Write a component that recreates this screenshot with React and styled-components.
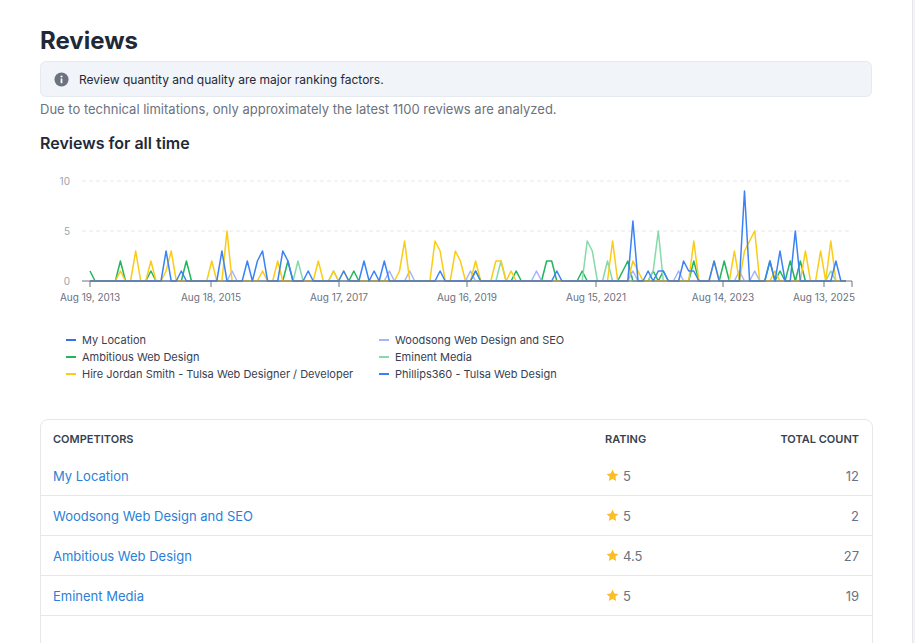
import React from 'react';
import styled, { createGlobalStyle } from 'styled-components';

const Global = createGlobalStyle`
  body { margin: 0; background: #f3f4f6; font-family: Inter, "Noto Sans", sans-serif; }
`;

const Page = styled.div`
  width: 913px;
  height: 643px;
  background: #fff;
  border-right: 1px solid #e5e7eb;
  box-sizing: border-box;
  padding: 26px 40px 0 40px;
  overflow: hidden;
`;

const Title = styled.h1`
  margin: 0 0 6px;
  font-size: 24px;
  font-weight: 700;
  color: #1f2937;
`;

const Notice = styled.div`
  display: flex;
  align-items: center;
  gap: 10px;
  background: #f1f4f9;
  border: 1px solid #e5e9f0;
  border-radius: 6px;
  padding: 0 13px;
  height: 34px;
  font-size: 12px;
  color: #1f2937;
`;

const Muted = styled.p`
  margin: 4px 0 0;
  font-size: 13px;
  color: #6b7280;
`;

const Subtitle = styled.h2`
  margin: 16px 0 0;
  font-size: 16px;
  font-weight: 600;
  color: #1f2937;
`;

const ChartWrap = styled.div`
  margin: 8px 0 0 -40px;
`;

const Legend = styled.div`
  display: grid;
  grid-template-columns: 313px auto;
  row-gap: 3px;
  margin: 22px 0 0 26px;
  font-size: 11px;
  color: #374151;
`;

const LegendItem = styled.div`
  display: flex;
  align-items: center;
  gap: 6px;
  height: 14px;
  &::before {
    content: '';
    width: 10px;
    height: 2px;
    background: ${p => p.$color};
  }
`;

const Card = styled.div`
  margin-top: 38px;
  border: 1px solid #e5e7eb;
  border-radius: 8px;
  width: 833px;
  box-sizing: border-box;
  height: 240px;
`;

const Row = styled.div`
  display: grid;
  grid-template-columns: 552px 1fr 120px;
  align-items: center;
  height: ${p => (p.$head ? 36 : 40)}px;
  padding: 0 13px 0 12px;
  border-bottom: ${p => (p.$head ? 'none' : '1px solid #e5e7eb')};
  box-sizing: border-box;
`;

const Head = styled.div`
  font-size: 11px;
  font-weight: 600;
  color: #374151;
  text-align: ${p => (p.$right ? 'right' : 'left')};
  padding-top: 2px;
`;

const Name = styled.a`
  color: #2b7fd6;
  font-size: 13px;
  text-decoration: none;
`;

const Rating = styled.div`
  display: flex;
  align-items: center;
  gap: 3px;
  font-size: 13px;
  color: #6b7280;
`;

const Count = styled.div`
  text-align: right;
  font-size: 13px;
  color: #6b7280;
`;

const Star = () => (
  <svg width="15" height="15" viewBox="0 0 24 24">
    <path d="M12 2.5l2.9 6.2 6.6.8-4.9 4.6 1.3 6.6L12 17.4l-5.9 3.3 1.3-6.6-4.9-4.6 6.6-.8z" fill="#fbbf24" />
  </svg>
);

const colors = {
  my: '#3b6fe8',
  wood: '#a5b4fc',
  amb: '#22b55c',
  emi: '#86d9a8',
  hire: '#facc15',
  phil: '#3b82f6',
};

function series(n, seed, density, max, peaks) {
  let s = seed;
  const rnd = () => {
    s = (s * 9301 + 49297) % 233280;
    return s / 233280;
  };
  const a = [];
  for (let i = 0; i < n; i++) a.push(rnd() < density ? 1 + Math.floor(rnd() * max) : 0);
  Object.entries(peaks).forEach(([k, v]) => (a[+k] = v));
  return a;
}

const N = 150;
const data = [
  { c: colors.amb, v: series(N, 7, 0.08, 2, { 0: 1, 90: 2, 91: 2, 140: 2 }) },
  { c: colors.emi, v: series(N, 13, 0.03, 2, { 98: 4, 99: 3, 112: 5 }) },
  { c: colors.wood, v: series(N, 21, 0.03, 1, {}) },
  { c: colors.hire, v: series(N, 5, 0.22, 3, { 27: 5, 62: 4, 68: 4, 103: 4, 119: 4, 130: 4, 131: 5, 146: 4 }) },
  { c: colors.phil, v: series(N, 3, 0.18, 3, { 107: 6, 129: 9, 139: 5, 147: 2 }) },
];

const X0 = 90, X1 = 846, Y0 = 120, YS = 10;
const px = i => X0 + (i / (N - 1)) * (X1 - X0);
const ticks = [
  ['Aug 19, 2013', 90], ['Aug 18, 2015', 211], ['Aug 17, 2017', 339], ['Aug 16, 2019', 467],
  ['Aug 15, 2021', 596], ['Aug 14, 2023', 723], ['Aug 13, 2025', 824],
];

const Chart = () => (
  <svg width="913" height="150" style={{ display: 'block' }}>
    {[0, 5, 10].map(v => (
      <g key={v}>
        <text x="70" y={Y0 - v * YS + 4} fontSize="10" fill="#9ca3af" textAnchor="end" fontFamily="Inter">{v}</text>
        {v > 0 && <line x1="82" x2="852" y1={Y0 - v * YS} y2={Y0 - v * YS} stroke="#e5e7eb" strokeDasharray="4 3" />}
      </g>
    ))}
    {data.map((d, k) => (
      <polyline key={k} fill="none" stroke={d.c} strokeWidth="1.5" strokeLinejoin="round"
        points={d.v.map((y, i) => `${px(i).toFixed(1)},${Y0 - y * YS}`).join(' ')} />
    ))}
    <line x1="82" x2="852" y1={Y0} y2={Y0} stroke="#6b7280" />
    {ticks.map(([t, x]) => (
      <g key={t}>
        <line x1={x - 6 < 82 ? 82 : x} x2={x - 6 < 82 ? 82 : x} y1={Y0} y2={Y0 + 6} stroke="#6b7280" />
        <text x={x} y={Y0 + 20} fontSize="10" fill="#6b7280" textAnchor="middle" fontFamily="Inter">{t}</text>
      </g>
    ))}
    <line x1="852" x2="852" y1={Y0} y2={Y0 + 6} stroke="#6b7280" />
  </svg>
);

const rows = [
  ['My Location', '5', 12],
  ['Woodsong Web Design and SEO', '5', 2],
  ['Ambitious Web Design', '4.5', 27],
  ['Eminent Media', '5', 19],
];

export default function App() {
  return (
    <Page>
      <Global />
      <Title>Reviews</Title>
      <Notice>
        <svg width="15" height="15" viewBox="0 0 16 16">
          <circle cx="8" cy="8" r="7.5" fill="#6b7280" />
          <rect x="7.1" y="7" width="1.8" height="5" fill="#fff" />
          <circle cx="8" cy="4.8" r="1.1" fill="#fff" />
        </svg>
        Review quantity and quality are major ranking factors.
      </Notice>
      <Muted>Due to technical limitations, only approximately the latest 1100 reviews are analyzed.</Muted>
      <Subtitle>Reviews for all time</Subtitle>
      <ChartWrap><Chart /></ChartWrap>
      <Legend>
        <LegendItem $color={colors.my}>My Location</LegendItem>
        <LegendItem $color={colors.wood}>Woodsong Web Design and SEO</LegendItem>
        <LegendItem $color={colors.amb}>Ambitious Web Design</LegendItem>
        <LegendItem $color={colors.emi}>Eminent Media</LegendItem>
        <LegendItem $color={colors.hire}>Hire Jordan Smith - Tulsa Web Designer / Developer</LegendItem>
        <LegendItem $color={colors.phil}>Phillips360 - Tulsa Web Design</LegendItem>
      </Legend>
      <Card>
        <Row $head>
          <Head>COMPETITORS</Head>
          <Head>RATING</Head>
          <Head $right>TOTAL COUNT</Head>
        </Row>
        {rows.map(([n, r, c]) => (
          <Row key={n}>
            <Name href="#">{n}</Name>
            <Rating><Star />{r}</Rating>
            <Count>{c}</Count>
          </Row>
        ))}
      </Card>
    </Page>
  );
}
